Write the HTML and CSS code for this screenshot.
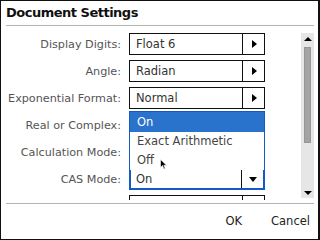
FILE: index.html
```html
<!DOCTYPE html>
<html>
<head>
<meta charset="utf-8">
<link rel="stylesheet" href="styles.css">
</head>
<body>
<div class="dialog">
  <div class="title">Document Settings</div>
  <div class="body">
    <div class="rows">
      <div class="row"><span class="label">Display Digits:</span><div class="select"><span class="value">Float 6</span><span class="btn"><span class="tri-right"></span></span></div></div>
      <div class="row"><span class="label">Angle:</span><div class="select"><span class="value">Radian</span><span class="btn"><span class="tri-right"></span></span></div></div>
      <div class="row"><span class="label">Exponential Format:</span><div class="select"><span class="value">Normal</span><span class="btn"><span class="tri-right"></span></span></div></div>
      <div class="row"><span class="label">Real or Complex:</span><div class="select"><span class="value"></span><span class="btn"><span class="tri-right"></span></span></div></div>
      <div class="row"><span class="label">Calculation Mode:</span><div class="select"><span class="value"></span><span class="btn"><span class="tri-right"></span></span></div></div>
      <div class="row"><span class="label">CAS Mode:</span>
        <div class="select open"><span class="value">On</span><span class="btn"><span class="tri-down"></span></span>
          <ul class="list">
            <li class="sel">On</li>
            <li>Exact Arithmetic</li>
            <li>Off <svg class="cursor" width="7" height="11" viewBox="0 0 7 11"><path d="M0.5 0.5 L0.5 8.5 L2.5 6.5 L4 10 L5.2 9.4 L3.8 6.2 L6.5 6.2 Z" fill="#000" stroke="#fff" stroke-width="0.6"/></svg></li>
          </ul>
        </div>
      </div>
      <div class="row"><span class="label"></span><div class="select"><span class="value"></span><span class="btn"></span></div></div>
    </div>
    <div class="scrollbar">
      <span class="sb-up"></span>
      <div class="sb-track"><div class="sb-thumb"></div></div>
      <span class="sb-down"></span>
    </div>
  </div>
  <div class="footer">
    <span class="action">OK</span>
    <span class="action">Cancel</span>
  </div>
</div>
</body>
</html>
```

FILE: styles.css
```css
* { box-sizing: border-box; }
html, body { margin: 0; padding: 0; background: #fff; }
.dialog {
  width: 320px;
  height: 240px;
  border: 1px solid #111;
  border-right-width: 2px;
  background: #fff;
  font-family: "DejaVu Sans", sans-serif;
  display: flex;
  flex-direction: column;
}
.title {
  height: 25px;
  margin: 0 4px 0 5px;
  padding: 2px 0 0 0;
  border-bottom: 1px solid #b4b4b4;
  font-weight: bold;
  font-size: 13px;
  letter-spacing: -0.5px;
  line-height: 20px;
  color: #111;
}
.body {
  height: 174px;
  overflow: hidden;
  display: flex;
  padding: 7px 4px 0 5px;
}
.rows {
  display: flex;
  flex-direction: column;
  gap: 5px;
  width: 259px;
}
.row {
  display: grid;
  grid-template-columns: 115px 136px;
  column-gap: 8px;
  align-items: center;
  height: 22px;
  flex: none;
}
.label {
  text-align: right;
  font-size: 11.2px;
  color: #555;
  white-space: nowrap;
}
.select {
  position: relative;
  height: 22px;
  border: 1px solid #111;
  display: flex;
  align-items: center;
  background: #fff;
}
.value {
  flex: 1;
  padding-left: 6px;
  font-size: 11.5px;
  color: #333;
}
.btn {
  width: 22px;
  height: 100%;
  border-left: 1px solid #111;
  display: flex;
  align-items: center;
  justify-content: center;
}
.tri-right {
  width: 0; height: 0;
  border-top: 4px solid transparent;
  border-bottom: 4px solid transparent;
  border-left: 5px solid #000;
  margin-left: 1px;
}
.tri-down {
  width: 0; height: 0;
  border-left: 4px solid transparent;
  border-right: 4px solid transparent;
  border-top: 5px solid #000;
}
.select.open {
  border: 2px solid #1559c4;
}
.select.open .value { padding-left: 5px; }
.select.open .btn { border-left-color: #111; }
.list {
  position: absolute;
  left: -2px;
  right: -2px;
  bottom: 100%;
  margin: 0;
  padding: 0;
  list-style: none;
  border: 1px solid #1559c4;
  border-bottom: none;
  background: #fff;
}
.list li {
  position: relative;
  height: 19px;
  line-height: 19px;
  padding-left: 7px;
  font-size: 11.5px;
  color: #444;
}
.list li.sel {
  background: #2a73cd;
  color: #fff;
  height: 20px;
  line-height: 20px;
}
.cursor {
  position: absolute;
  left: 30px;
  top: 8px;
}
.scrollbar {
  margin-left: auto;
  width: 13px;
  height: 165px;
  background: #e6e6e6;
  display: flex;
  flex-direction: column;
  align-items: center;
  padding: 4px 0 3px;
}
.sb-up {
  width: 0; height: 0;
  border-left: 4px solid transparent;
  border-right: 4px solid transparent;
  border-bottom: 4px solid #000;
}
.sb-down {
  width: 0; height: 0;
  border-left: 4px solid transparent;
  border-right: 4px solid transparent;
  border-top: 4px solid #000;
}
.sb-track {
  flex: 1;
  width: 100%;
  padding: 6px 3px 0 3px;
}
.sb-thumb {
  height: 96px;
  background: #a4a4a4;
  border: 1px solid #969696;
}
.footer {
  margin: 3px 4px 0 5px;
  border-top: 1px solid #b4b4b4;
  flex: 1;
  display: flex;
  justify-content: flex-end;
  align-items: center;
  gap: 29px;
  padding: 0 4px 2px 0;
}
.action {
  font-size: 11.5px;
  color: #222;
}
```
